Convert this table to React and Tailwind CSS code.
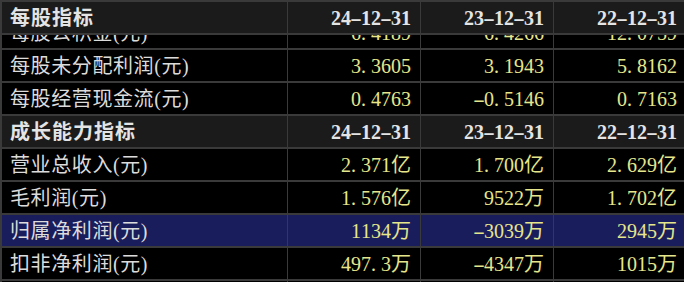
import React from 'react';

const FONT = { fontFamily: "'Liberation Serif', 'Noto Sans CJK SC', serif" };

const cols = 'grid grid-cols-[285px_132px_132px_132px] gap-x-px';

// SimSun style: period and dash take a half-width cell
const Num = ({ v }) => (
  <>
    {v.split('').map((c, i) => {
      if (c === '.') return <span key={i} className="inline-block w-[10px] text-left">.</span>;
      if (c === '-')
        return (
          <span key={i} className="inline-block w-[10px] text-center scale-x-[1.8]">
            -
          </span>
        );
      return <span key={i}>{c}</span>;
    })}
  </>
);

const HeadRow = ({ title, dates }) => (
  <div className={`${cols} h-[31px]`}>
    <div className="bg-[#1b1b1b] flex items-center pl-2 text-[20px] font-bold tracking-[1px] text-[#e4e4e4]">
      {title}
    </div>
    {dates.map((d) => (
      <div key={d} className="bg-[#1b1b1b] flex items-center justify-end pr-[9px] text-[20px] font-bold text-[#e4e4e4]">
        <Num v={d} />
      </div>
    ))}
  </div>
);

const DataRow = ({ label, values, active }) => {
  const bg = active ? 'bg-[#1a1d5c]' : 'bg-black';
  return (
    <div className={`${cols} h-[31px]`}>
      <div className={`${bg} flex items-center pl-2 text-[20px] tracking-[0.6px] text-[#dcdcdc]`}>{label}</div>
      {values.map((v, i) => (
        <div key={i} className={`${bg} flex items-center justify-end pr-[9px] text-[20px] text-[#e6e68c]`}>
          <Num v={v} />
        </div>
      ))}
    </div>
  );
};

const dates = ['24-12-31', '23-12-31', '22-12-31'];

export default function App() {
  return (
    <div className="w-[684px] h-[282px] overflow-hidden bg-black" style={FONT}>
      <div className="w-[686px] flex flex-col gap-y-[2px] bg-[#3a3a3a] border-l-2 border-t-2 border-[#3a3a3a]">
        <HeadRow title="每股指标" dates={dates} />
        {/* row scrolled under the header */}
        <div className="h-[13px] overflow-hidden flex flex-col justify-end">
          <DataRow label="每股公积金(元)" values={['6.4189', '6.4266', '12.0759']} />
        </div>
        <DataRow label="每股未分配利润(元)" values={['3.3605', '3.1943', '5.8162']} />
        <DataRow label="每股经营现金流(元)" values={['0.4763', '-0.5146', '0.7163']} />
        <HeadRow title="成长能力指标" dates={dates} />
        <DataRow label="营业总收入(元)" values={['2.371亿', '1.700亿', '2.629亿']} />
        <DataRow label="毛利润(元)" values={['1.576亿', '9522万', '1.702亿']} />
        <DataRow label="归属净利润(元)" values={['1134万', '-3039万', '2945万']} active />
        <DataRow label="扣非净利润(元)" values={['497.3万', '-4347万', '1015万']} />
        <DataRow label="营业总收入同比增长(%)" values={['39.46', '-35.33', '12.41']} />
      </div>
    </div>
  );
}
